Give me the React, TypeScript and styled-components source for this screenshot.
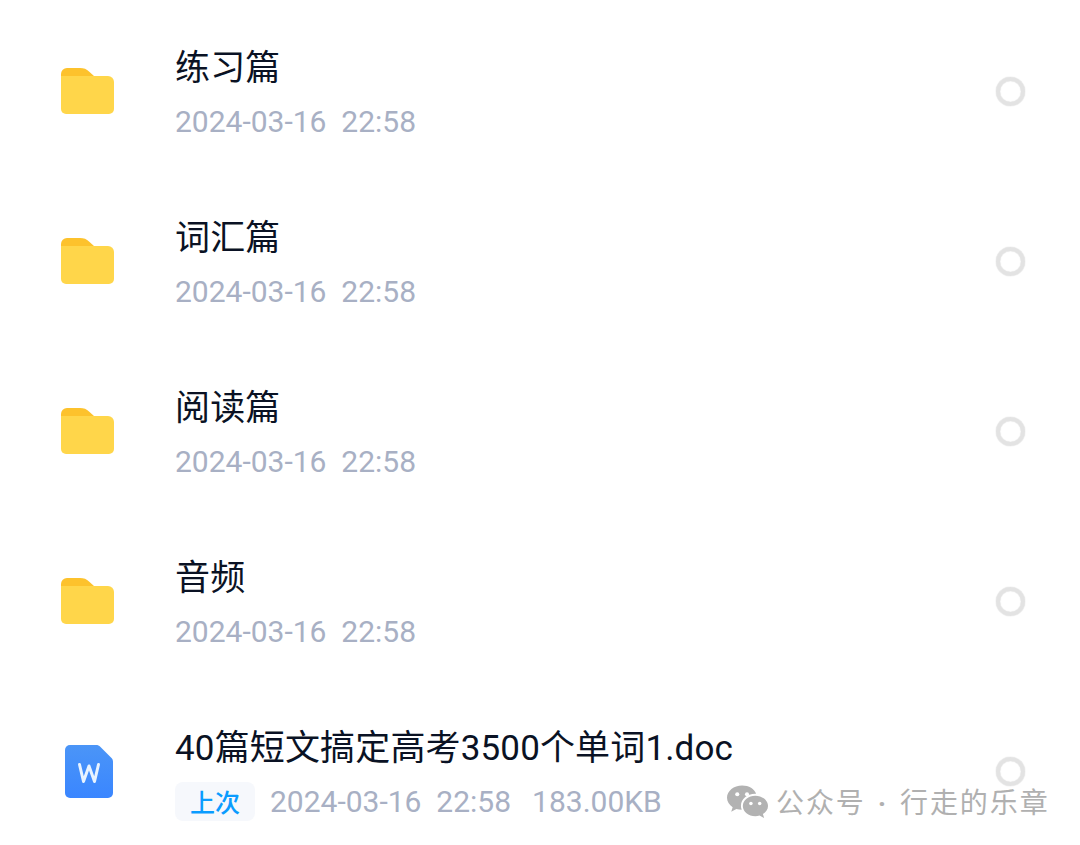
import React from "react";
import styled, { createGlobalStyle } from "styled-components";

const GlobalStyle = createGlobalStyle`
  html, body {
    margin: 0;
    padding: 0;
    background: #ffffff;
  }
  body {
    font-family: Roboto, "Noto Sans CJK SC", sans-serif;
    overflow: hidden;
  }
`;

const Screen = styled.div`
  position: relative;
  width: 1080px;
  height: 845px;
  overflow: hidden;
  padding-top: 6px;
  box-sizing: border-box;
  background: #ffffff;
`;

const Row = styled.div`
  display: flex;
  align-items: center;
  height: 170px;
  padding-left: 61px;
  padding-right: 55px;
`;

const IconSlot = styled.div`
  width: 53px;
  margin-right: 62px;
  display: flex;
  justify-content: center;
  flex-shrink: 0;
`;

const Info = styled.div`
  flex: 1;
  display: flex;
  flex-direction: column;
  gap: 10px;
  min-width: 0;
  padding-top: 6px;
  margin-left: -1px;
`;

const Title = styled.div`
  font-size: 35px;
  letter-spacing: 0.15px;
  line-height: 44px;
  color: #0a1224;
  white-space: nowrap;
`;

const Meta = styled.div`
  display: flex;
  align-items: center;
  height: 40px;
  font-size: 30px;
  color: #a8b0c4;
  white-space: pre;
`;

const Tag = styled.span`
  display: inline-flex;
  align-items: center;
  justify-content: center;
  width: 80px;
  height: 39px;
  margin-right: 15px;
  border-radius: 8px;
  background: #f6f8fc;
  color: #0a9cff;
  font-size: 25px;
  font-weight: 500;
`;

const Size = styled.span`
  margin-left: 21px;
`;

const Radio = styled.div`
  width: 29px;
  height: 29px;
  box-sizing: border-box;
  border: 4px solid #e3e3e3;
  border-radius: 50%;
  box-shadow: 0 0 1px #b8b8b8, inset 0 0 1px #d0d0d0;
  flex-shrink: 0;
`;

const Watermark = styled.div`
  position: absolute;
  left: 727px;
  top: 784px;
  display: flex;
  align-items: center;
  gap: 8px;
  color: #b0b0b0;
  font-size: 28px;
  letter-spacing: 1.9px;
  line-height: 40px;
  white-space: pre;
`;

const WatermarkDot = styled.span`
  margin: 0 12px;
  font-weight: 700;
`;

const WordSvg = styled.svg`
  margin-left: 3px;
`;

const WechatSvg = styled.svg`
  margin-top: -5px;
`;

const FolderIcon = () => (
  <svg width="53" height="46" viewBox="0 0 53 46">
    <path d="M0 6a6 6 0 0 1 6-6h13c4 0 6.500 1 9 3.500L33 8v4H0z" fill="#fdc22c" />
    <path d="M0 8h47a6 6 0 0 1 6 6v27a5 5 0 0 1-5 5H5a5 5 0 0 1-5-5z" fill="#ffd64a" />
  </svg>
);

const WordIcon = () => (
  <WordSvg width="48" height="53" viewBox="0 0 48 53">
    <defs>
      <linearGradient id="wordFill" x1="0" y1="0" x2="0" y2="1">
        <stop offset="0" stopColor="#4b95f7" />
        <stop offset="1" stopColor="#3a86ff" />
      </linearGradient>
    </defs>
    <path d="M5 0h26c2 0 3 .5 4.500 2L46 12.500c1.500 1.500 2 2.500 2 4.500V48a5 5 0 0 1-5 5H5a5 5 0 0 1-5-5V5a5 5 0 0 1 5-5z" fill="url(#wordFill)" />
    <path d="M14.500 19.500l4 17 5.500-15.500 5.500 15.500 4-17" fill="none" stroke="#e8f3ff" strokeWidth="3" strokeLinecap="round" strokeLinejoin="round" />
  </WordSvg>
);

const WechatIcon = () => (
  <WechatSvg width="41" height="34" viewBox="0 0 42 34">
    <path d="M15.500 0C7 0 0 5.600 0 12.600c0 4 2.300 7.400 5.800 9.700L4.300 27l5.300-2.800c1.800.5 3.600.8 5.500.8-.6-1.500-.8-2.800-.8-4.200 0-6.800 6.400-12.300 14.500-12.300h1C28.200 3.400 22.400 0 15.500 0z" fill="#b2b2b2" />
    <circle cx="10.500" cy="9" r="2.100" fill="#ffffff" />
    <circle cx="20.500" cy="9" r="2.100" fill="#ffffff" />
    <path d="M29 10.500c-7 0-12.800 4.700-12.800 10.500S22 31.500 29 31.500c1.500 0 3-.3 4.300-.7L38 33.500l-1.200-4.200C39.900 27.300 42 24.400 42 21c0-5.800-6-10.500-13-10.500z" fill="#b2b2b2" />
    <circle cx="24.500" cy="18.500" r="1.800" fill="#ffffff" />
    <circle cx="33.500" cy="18.500" r="1.800" fill="#ffffff" />
  </WechatSvg>
);

const folders = ["练习篇", "词汇篇", "阅读篇", "音频"];
const stamp = "2024-03-16  22:58";

const App: React.FC = () => {
  return (
    <Screen>
      <GlobalStyle />
      {folders.map((name) => (
        <Row key={name}>
          <IconSlot>
            <FolderIcon />
          </IconSlot>
          <Info>
            <Title>{name}</Title>
            <Meta>{stamp}</Meta>
          </Info>
          <Radio />
        </Row>
      ))}
      <Row>
        <IconSlot>
          <WordIcon />
        </IconSlot>
        <Info>
          <Title>40篇短文搞定高考3500个单词1.doc</Title>
          <Meta>
            <Tag>上次</Tag>
            {stamp}
            <Size>183.00KB</Size>
          </Meta>
        </Info>
        <Radio />
      </Row>
      <Watermark>
        <WechatIcon />
        <span>
          公众号<WatermarkDot>·</WatermarkDot>行走的乐章
        </span>
      </Watermark>
    </Screen>
  );
};

export default App;
